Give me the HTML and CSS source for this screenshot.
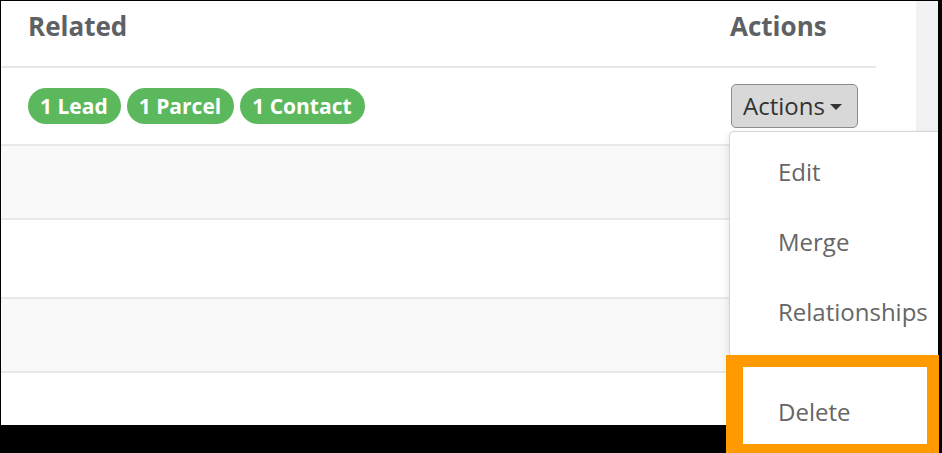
FILE: index.html
```html
<!DOCTYPE html>
<html>
<head>
<meta charset="utf-8">
<link rel="stylesheet" href="styles.css">
</head>
<body>
<div class="frame">
  <div class="table">
    <div class="row head">
      <div class="cell">Related</div>
      <div class="cell">Actions</div>
    </div>
    <div class="row r1">
      <div class="cell badges">
        <span class="badge">1 Lead</span>
        <span class="badge">1 Parcel</span>
        <span class="badge">1 Contact</span>
      </div>
      <div class="cell">
        <button class="btn">Actions<span class="caret"></span></button>
      </div>
    </div>
    <div class="row r2 alt"></div>
    <div class="row r3"></div>
    <div class="row r4 alt"></div>
    <div class="row r5"></div>
  </div>
  <div class="strip"></div>
  <ul class="menu">
    <li class="item">Edit</li>
    <li class="item">Merge</li>
    <li class="item">Relationships</li>
    <li class="divider"></li>
    <li class="item">Delete</li>
  </ul>
</div>
<div class="highlight"></div>
</body>
</html>
```
FILE: styles.css
```css
html, body {
  margin: 0;
  padding: 0;
  height: 453px;
  overflow: hidden;
  background: #000;
}
body {
  font-family: "Open Sans", "Liberation Sans", sans-serif;
  position: relative;
}
.frame {
  position: relative;
  margin: 1px 4px 0 1px;
  width: 937px;
  height: 424px;
  background: #fff;
  display: flex;
}
.table {
  width: 875px;
  display: flex;
  flex-direction: column;
}
.row {
  display: grid;
  grid-template-columns: 702px 1fr;
  padding-left: 27px;
  border-bottom: 2px solid #e6e9ec;
  flex: none;
}
.head {
  padding-top: 7px;
  box-sizing: border-box;
  height: 67px;
  font-weight: 700;
  font-size: 26px;
  line-height: 36px;
  color: #5e6164;
}
.r1 { height: 76px; align-items: center; }
.r2 { height: 72px; }
.r3 { height: 77px; }
.r4 { height: 72px; }
.r5 { height: 52px; border-bottom: none; }
.alt { background: #f9f9f9; }
.badges {
  display: flex;
  gap: 6px;
}
.badge {
  background: #5cb85c;
  color: #fff;
  font-weight: 700;
  font-size: 21px;
  line-height: 36px;
  height: 36px;
  padding: 0 13px 0 12px;
  border-radius: 18px;
}
.btn {
  font-family: inherit;
  font-size: 24px;
  line-height: 32px;
  color: #333;
  background: #d8d8d8;
  border: 1px solid #8c8c8c;
  border-radius: 5px;
  padding: 5px 15px 5px 11px;
  margin-left: 1px;
  display: inline-flex;
  align-items: center;
  gap: 5px;
}
.caret {
  width: 0;
  height: 0;
  border-top: 6px solid #333;
  border-left: 6.5px solid transparent;
  border-right: 6.5px solid transparent;
  margin-top: 2px;
}
.strip {
  margin-left: auto;
  width: 22px;
  background: #f2f2f2;
}
.menu {
  position: absolute;
  left: 728px;
  top: 130px;
  right: 0;
  margin: 0;
  padding: 5px 0 6px;
  list-style: none;
  background: #fff;
  border: 1px solid #d5d5d5;
  border-right: none;
  border-radius: 5px 0 0 5px;
  box-shadow: 0 4px 10px rgba(0,0,0,0.12);
  font-size: 24px;
  color: #666;
}
.item {
  padding: 21px 0 21px 48px;
  line-height: 28px;
  white-space: nowrap;
}
.divider {
  height: 1px;
  margin: 14px 0 15px;
  background: #e5e5e5;
}
.highlight {
  position: absolute;
  left: 726px;
  top: 355px;
  width: 184px;
  height: 77px;
  border-style: solid;
  border-color: #ff9a00;
  border-width: 12px 12px 12px 17px;
  pointer-events: none;
}
```
